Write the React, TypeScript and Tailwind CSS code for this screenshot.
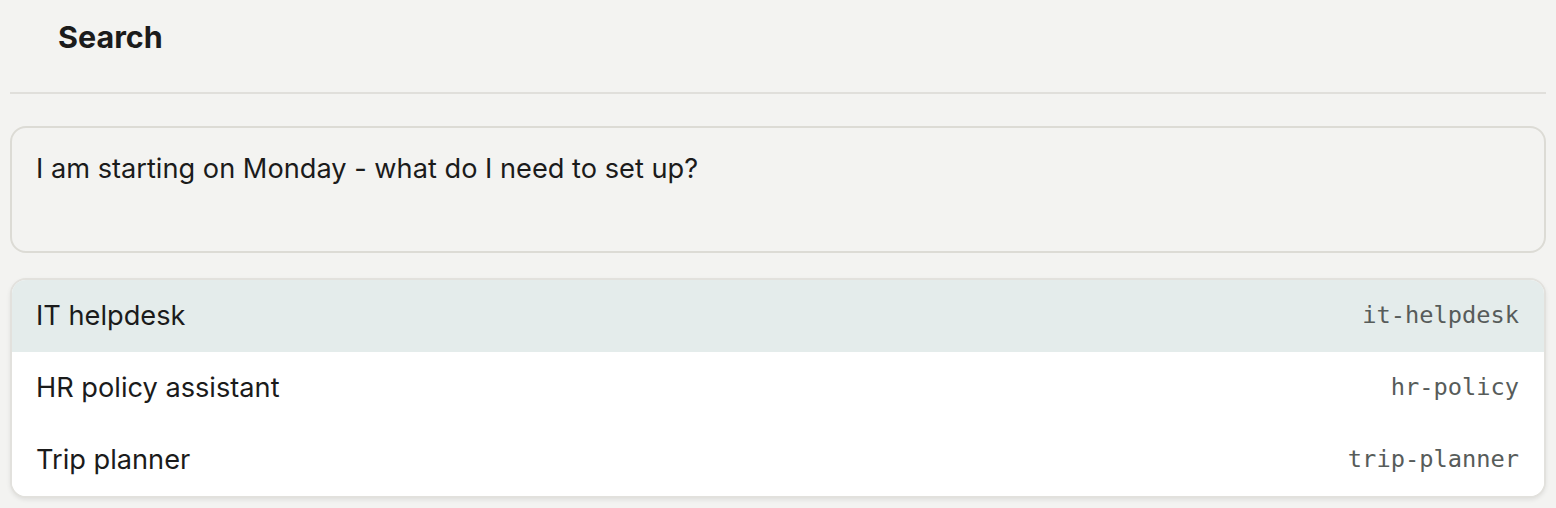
import React from 'react';

const agents = [
  { name: 'IT helpdesk', slug: 'it-helpdesk' },
  { name: 'HR policy assistant', slug: 'hr-policy' },
  { name: 'Trip planner', slug: 'trip-planner' },
];

const App: React.FC = () => {
  const active = 0;

  return (
    <div className="min-h-screen bg-[#f3f3f1] text-[#1b1b1b] font-['Inter',sans-serif]">
      <div className="px-[10px]">
        <div className="h-[94px] border-b-2 border-[#e0dfdb] pl-[48px] pt-[19px]">
          <h1 className="text-[30.5px] font-bold leading-[36px]">Search</h1>
        </div>

        <div className="mt-[32px] h-[127px] rounded-[16px] border-2 border-[#dcdbd5] bg-[#f3f3f1] px-[24px] pt-[24px]">
          <p className="text-[27.2px] leading-[34px]">I am starting on Monday - what do I need to set up?</p>
        </div>

        <div className="mt-[25px] overflow-hidden rounded-[16px] border-2 border-[#e2e1dd] bg-white shadow-[0_2px_4px_rgba(0,0,0,0.08)]">
          {agents.map((a, i) => (
            <div
              key={a.slug}
              className={`flex h-[72px] items-center justify-between pl-[24px] pr-[25px] ${
                i === active ? 'bg-[#e4eceb]' : 'bg-white'
              }`}
            >
              <span className="text-[27.2px] leading-[34px]">{a.name}</span>
              <span className="font-['DejaVu_Sans_Mono',monospace] text-[23.7px] text-[#575c5a]">{a.slug}</span>
            </div>
          ))}
        </div>
      </div>
    </div>
  );
};

export default App;
